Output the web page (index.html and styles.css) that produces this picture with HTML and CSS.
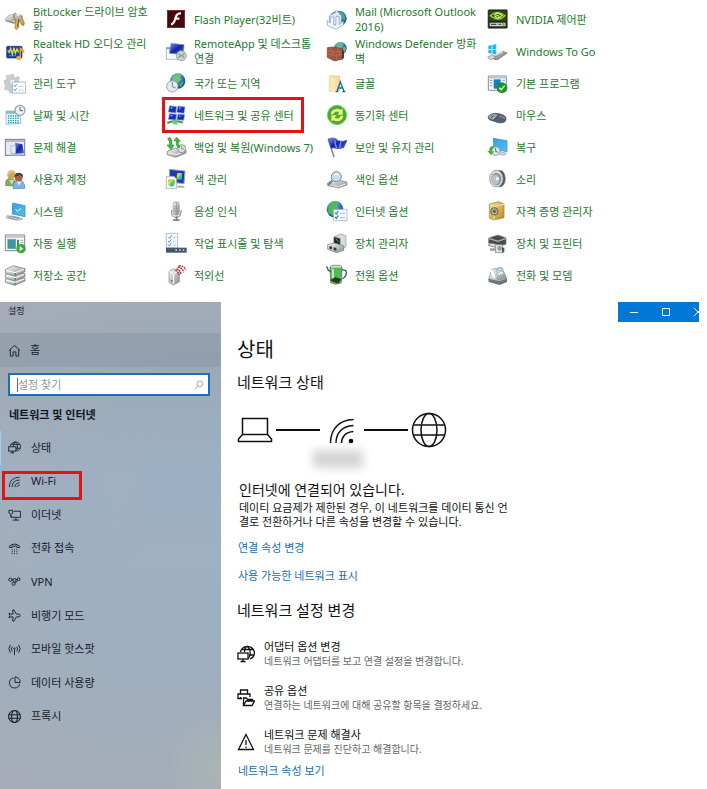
FILE: index.html
```html
<!DOCTYPE html>
<html lang="ko">
<head>
<meta charset="utf-8">
<meta name="viewport" content="width=device-width, initial-scale=1">
<title>설정</title>
<link rel="stylesheet" href="styles.css">
</head>
<body>
<svg class="defs" aria-hidden="true">
  <defs>
    <radialGradient id="earth" cx=".4" cy=".3" r=".75"><stop offset="0" stop-color="#8ed4f2"/><stop offset=".5" stop-color="#2f80c6"/><stop offset="1" stop-color="#123a80"/></radialGradient>
    <linearGradient id="navy" x2="1" y2="1"><stop offset="0" stop-color="#7f93e8"/><stop offset=".5" stop-color="#1224a8"/><stop offset="1" stop-color="#4f6cdc"/></linearGradient>
    <linearGradient id="sky" x2="1" y2="1"><stop offset="0" stop-color="#2ba0e6"/><stop offset="1" stop-color="#55bdf5"/></linearGradient>
    <linearGradient id="metal" x2="1" y2="1"><stop offset="0" stop-color="#fafafa"/><stop offset="1" stop-color="#888b90"/></linearGradient>
    <linearGradient id="gold" x2="1" y2="1"><stop offset="0" stop-color="#f4de95"/><stop offset="1" stop-color="#b88a28"/></linearGradient>
    <linearGradient id="rainbow" x2="1" y2="1"><stop offset="0" stop-color="#f03838"/><stop offset=".3" stop-color="#f7e531"/><stop offset=".55" stop-color="#3bd860"/><stop offset=".8" stop-color="#29aef0"/><stop offset="1" stop-color="#c33ce0"/></linearGradient>
    <symbol id="globe" viewBox="0 0 36 36"><g fill="none" stroke="currentColor"><circle cx="18" cy="18" r="16.5"/><ellipse cx="18" cy="18" rx="8" ry="16.5"/><path d="M2.500 13h31M2.500 23h31"/></g></symbol>
    <symbol id="net-globe" viewBox="0 0 18 18"><g fill="none" stroke="currentColor" stroke-width="1.300"><path d="M3.500 7a7 6.500 0 1 1 9.500 7M7.500 7C7.700 3.500 9 1.500 10 1.500s3.200 3 3.200 6.500c0 2.500-.8 4-1.700 5.500M4 4.500h12M12 10h4.500"/><rect x="1" y="8" width="10" height="6"/><path d="M6 14v2.500M3.500 16.500h5"/></g></symbol>
  </defs>
</svg>

<nav class="panel" aria-label="제어판">
  <a class="tile" href="#"><svg viewBox="0 0 66 66"><path d="M4 31q12-14 38-13l14 6-9 9-23 8-20-5z" fill="url(#metal)" stroke="#aaa" stroke-width="2"/><path d="M5 38l24 7 14-5" fill="none" stroke="#898989" stroke-width="4"/><path d="M35 14a12 13 0 1 0 17 9l9 22-2 8-7-3-6-15-3 25-6 5-4-5 2-26a12 13 0 0 1 0-20z" fill="url(#gold)" stroke="#986f20" stroke-width="2"/><circle cx="42" cy="20" r="4" fill="#fff1bb"/><path d="M44 34l-3 22" stroke="#6e4f20" stroke-width="3"/></svg><span>BitLocker 드라이브 암호<br>화</span></a>
  <a class="tile" href="#"><svg viewBox="0 0 66 66"><rect x="8" y="19" width="46" height="35" rx="3" fill="#1641a8" stroke="#0b2a73" stroke-width="2"/><path d="M11 31l5 6 4-12 5 18 5-20 4 17 5-13 5 10" fill="none" stroke="#e3d94a" stroke-width="4"/><path d="M47 52V22q13 3 14 17-5-6-10-6v19" fill="#edac29" stroke="#aa700e" stroke-width="1"/><ellipse cx="44" cy="54" rx="8" ry="6" fill="#f1a626"/><path d="M15 47h21" stroke="#6aaae4" stroke-width="2"/></svg><span>Realtek HD 오디오 관리<br>자</span></a>
  <a class="tile" href="#"><svg viewBox="0 0 66 66"><path d="M20 7h9l1 7 6 3 6-5 6 7-5 6 3 6 6 1v9l-8 1-3 6 4 5-7 6-6-4-6 3-1 5h-8l-2-7-5-3-6 2-4-7 5-5-1-6-5-2V25l7-1 3-5-4-6 7-5 5 4z" fill="#c9cdd2" stroke="#a5abb2"/><circle cx="26" cy="30" r="9" fill="#f4f5f5" stroke="#aaa" stroke-width="2"/><path d="M25 30h40v33H25z" fill="#fcfdff" stroke="#8e979f" stroke-width="2"/><path d="M30 40l3 4 5-7M30 52l3 4 5-7" fill="none" stroke="#26a1cf" stroke-width="3"/><path d="M42 43h17M42 54h17" stroke="#b7bdc2" stroke-width="2"/></svg><span>관리 도구</span></a>
  <a class="tile" href="#"><svg viewBox="0 0 66 66"><path d="M6 21h40l5 37-45 3z" fill="#e8f6fb" stroke="#7da4b4" stroke-width="2"/><path d="M6 21h40v8H6z" fill="#7bbcd3"/><path d="M12 36h33M12 43h34M12 50h35M12 56h34" stroke="#3596b3" stroke-width="4" stroke-dasharray="4 3"/><circle cx="48" cy="19" r="15" fill="#edf2f6" stroke="#93a4b0" stroke-width="4"/><path d="M48 9v11h9" fill="none" stroke="#52626e" stroke-width="3"/></svg><span>날짜 및 시간</span></a>
  <a class="tile" href="#"><svg viewBox="0 0 66 66"><rect x="4" y="10" width="58" height="48" fill="#e8eaf2" stroke="#7a7f89" stroke-width="3"/><path d="M5 15h56" stroke="#aab1bf" stroke-width="5"/><path d="M33 20l22 5 5 27-27 1z" fill="url(#navy)"/><path d="M21 29h14v23H21z" fill="#e7edf4" stroke="#9ca7b5" stroke-width="2"/><path d="M20 56h37" stroke="#b5bfc8" stroke-width="4"/></svg><span>문제 해결</span></a>
  <a class="tile" href="#"><svg viewBox="0 0 66 66"><path d="M5 53q-2-24 16-22 13 0 16 23z" fill="#87ac5a" stroke="#638542" stroke-width="2"/><circle cx="22" cy="20" r="12" fill="#d9a15a"/><path d="M11 20q-1-15 12-14 11 0 12 12l-9-5z" fill="#dfc087"/><path d="M16 36l7 14 7-14" fill="#d5e2ad"/><path d="M28 62q-3-27 17-26 16 1 18 25z" fill="#80b5df" stroke="#527fab" stroke-width="2"/><circle cx="44" cy="28" r="12" fill="#9f6445"/><path d="M32 27q0-14 13-13 13 1 12 13l-9-6z" fill="#4b3c36"/><path d="M39 41l6 12 7-12" fill="#d9e9f3"/></svg><span>사용자 계정</span></a>
  <a class="tile" href="#"><svg viewBox="0 0 66 66"><path d="M26 9l37 8v33l-38-8z" fill="url(#sky)" stroke="#337da9" stroke-width="2"/><path d="M35 28l5 6 11-9" fill="none" stroke="#fff" stroke-width="3"/><path d="M9 47l29 4 18 6-17 4-32-8z" fill="#d7dce0" stroke="#8b949c" stroke-width="2"/><path d="M14 49l31 7M22 47l25 8M12 52l25 7" stroke="#7b8890" stroke-width="2"/></svg><span>시스템</span></a>
  <a class="tile" href="#"><svg viewBox="0 0 66 66"><path d="M4 9h58v47H4z" fill="#f8fafb" stroke="#7c878e" stroke-width="3"/><path d="M5 15h56" stroke="#bcc5cd" stroke-width="5"/><path d="M11 22h24v28H11z" fill="#4196a2" stroke="#3b7383"/><path d="M39 23h6v24h-6z" fill="#3c954c"/><path d="M49 25h9M49 32h9M49 39h9" stroke="#a3b3ba" stroke-width="3"/><circle cx="51" cy="50" r="14" fill="#35aa35"/><path d="M47 42v16l11-8z" fill="#fff"/></svg><span>자동 실행</span></a>
  <a class="tile" href="#"><svg viewBox="0 0 66 66"><g fill="url(#metal)" stroke="#696d70" stroke-width="2"><path d="M4 46l23-10 36 7v8L32 64 4 55z"/><path d="M4 32l23-10 36 7v9L32 51 4 42z"/><path d="M4 17L27 5l36 9v9L32 36 4 28z"/></g><path d="M6 19l27 7 27-10M6 34l27 7 28-10M6 48l27 7 28-10" stroke="#fff" stroke-width="3" fill="none"/><path d="M34 27v6M34 42v6M34 56v6" stroke="#33983a" stroke-width="4"/></svg><span>저장소 공간</span></a>

  <a class="tile" href="#"><svg viewBox="0 0 66 66"><rect x="7" y="7" width="52" height="52" fill="#430a0b" stroke="#6d1c1c" stroke-width="2"/><path d="M48 16c-13-1-15 9-18 19-3 9-5 14-12 14M28 32h15" fill="none" stroke="#fff" stroke-width="7"/></svg><span>Flash Player(32비트)</span></a>
  <a class="tile" href="#"><svg viewBox="0 0 66 66"><path d="M4 22h39v36H4z" fill="#f8f9ff" stroke="#8895bd" stroke-width="2"/><path d="M4 25h39" stroke="#7893d9" stroke-width="5"/><path d="M18 10l39 4-2 30-42-4z" fill="url(#navy)" stroke="#8a98ba" stroke-width="2"/><circle cx="49" cy="47" r="15" fill="#c8ceca" stroke="#879089" stroke-width="2"/><path d="M41 41l6 6-6 6M57 41l-6 6 6 6" fill="none" stroke="#278e43" stroke-width="3"/></svg><span>RemoteApp 및 데스크톱<br>연결</span></a>
  <a class="tile" href="#"><svg viewBox="0 0 66 66"><circle cx="38" cy="27" r="23" fill="url(#earth)"/><path d="M22 16q15-15 28-6l-8 7 7 5-12 10-10-2z" fill="#7ac267"/><path d="M48 31l8-3-6 17-8-4z" fill="#4fab6c"/><circle cx="22" cy="43" r="17" fill="#e4ebee" stroke="#99a6b0" stroke-width="3"/><path d="M22 30v14l10 4" fill="none" stroke="#788993" stroke-width="3"/></svg><span>국가 또는 지역</span></a>
  <a class="tile marked" href="#"><svg viewBox="0 0 66 66"><g fill="#1530b4" stroke="#8ca0dd" stroke-width="2"><path d="M14 5l21 3-3 19-22-3zM39 6l21 3-3 19-22-3zM14 29l21 2-3 17-22-2zM39 30l20 2-3 17-21-2z"/></g><path d="M16 9l7 1-3 6M41 10l7 1-3 6M16 33l7 1-3 5M41 34l7 1-3 5" fill="#8fa9ff"/><path d="M7 57q19-10 47-1" fill="none" stroke="#37a34e" stroke-width="6"/><path d="M24 51h14v10H24z" fill="#77c585"/></svg><span>네트워크 및 공유 센터</span></a>
  <a class="tile" href="#"><svg viewBox="0 0 66 66"><path d="M7 46l25-10 31 6v9L32 64 7 56z" fill="url(#metal)" stroke="#6a6e70" stroke-width="2"/><path d="M9 50l24 6 27-10" fill="none" stroke="#efefef" stroke-width="3"/><circle cx="50" cy="38" r="12" fill="#dfe6e2" stroke="#879187" stroke-width="3"/><path d="M50 30v9h7" fill="none" stroke="#666" stroke-width="2"/><path d="M14 4q9 8 6 23h7L18 41 6 27h7q4-10-5-19zM42 36q-11-7-8-22h-7L35 4l11 12h-6q-2 9 5 17z" fill="#42b83e" stroke="#258a29" stroke-width="2"/></svg><span>백업 및 복원(Windows 7)</span></a>
  <a class="tile" href="#"><svg viewBox="0 0 66 66"><path d="M13 4l47 5-3 38-43-5z" fill="#2136b4" stroke="#96a4bd" stroke-width="3"/><path d="M36 14l16 2-2 19-15-1z" fill="url(#rainbow)"/><path d="M4 25h23l8 8v29H4z" fill="#fafafa" stroke="#989b9f" stroke-width="2"/><path d="M10 36l11-4 9 5-3 16-9 3-8-6z" fill="url(#rainbow)"/><path d="M36 53h20l4 6H38z" fill="#a8b0ba"/></svg><span>색 관리</span></a>
  <a class="tile" href="#"><svg viewBox="0 0 66 66"><path d="M20 30q-3 22 13 22t15-22" fill="none" stroke="#9a9fa7" stroke-width="4"/><rect x="24" y="5" width="19" height="41" rx="9" fill="url(#metal)" stroke="#969ca3" stroke-width="2"/><path d="M26 20h15M26 26h15M26 32h15M34 8v34" stroke="#858990" stroke-width="2"/><path d="M32 49h5v9h-5z" fill="#777"/><ellipse cx="34" cy="60" rx="11" ry="3" fill="#7c8288"/></svg><span>음성 인식</span></a>
  <a class="tile" href="#"><svg viewBox="0 0 66 66"><path d="M4 4h34v44H4z" fill="#f7fbff" stroke="#8ba0b6" stroke-width="2"/><path d="M10 15l4 4 6-9M9 27l4 4 6-9M9 38l4 4 6-9" fill="none" stroke="#3098d4" stroke-width="3"/><path d="M24 16h10M23 28h11M23 39h11" stroke="#9db1c1" stroke-width="2"/><path d="M3 47h62v15H3z" fill="#43546e"/><path d="M31 54h5M42 54h5M53 54h5" stroke="#cdd8e8" stroke-width="4"/></svg><span>작업 표시줄 및 탐색</span></a>
  <a class="tile" href="#"><svg viewBox="0 0 66 66"><path d="M12 21l16-7 15 6v34l-18 9-13-8z" fill="url(#metal)" stroke="#8a8d91" stroke-width="2"/><path d="M13 22l13 7 16-8M26 29l-1 31" fill="none" stroke="#fff" stroke-width="3"/><circle cx="20" cy="50" r="3" fill="#488a40"/><path d="M35 14q11 3 13 17M38 9q16 3 18 16M41 5q17 1 21 12M31 18q8 3 10 15" fill="none" stroke="#b92732" stroke-width="4" stroke-dasharray="6 2"/></svg><span>적외선</span></a>

  <a class="tile" href="#"><svg viewBox="0 0 66 66"><circle cx="39" cy="31" r="23" fill="url(#earth)"/><path d="M40 9q22 7 17 29l-12-8 4-12-11-2z" fill="#45a968"/><path d="M10 24L31 7l15 16v29H10z" fill="#dbe9fb" stroke="#7991bf" stroke-width="2"/><path d="M3 38l10 7V27h10v24h7V25h9v25l13-11v12L29 63 5 53z" fill="#f5f9ff" stroke="#8191af" stroke-width="2"/><path d="M15 19l14-7" stroke="#6f8fca" stroke-width="4"/></svg><span>Mail (Microsoft Outlook<br>2016)</span></a>
  <a class="tile" href="#"><svg viewBox="0 0 66 66"><circle cx="43" cy="25" r="19" fill="url(#earth)"/><path d="M33 10q11-7 20-1l-8 10-13 5zM54 20l7 4-5 14-8-8z" fill="#63bd70"/><path d="M4 23l15-2 31 5v31l-25 6L4 52z" fill="#9d5440" stroke="#723c31" stroke-width="2"/><path d="M5 32l20 4 25-3M5 42l20 4 25-3M14 23v10M35 24v10M20 35v10M41 35v10M12 44v9M32 46v14" fill="none" stroke="#c07d64" stroke-width="2"/><path d="M48 28l6 5v20l-6 5" fill="#56332f"/></svg><span>Windows Defender 방화<br>벽</span></a>
  <a class="tile" href="#"><svg viewBox="0 0 66 66"><path d="M11 11l30 2v43l-30 2z" fill="#f8dda0" stroke="#d8b86c" stroke-width="2"/><path d="M11 11l17 9v42l-17-7z" fill="#ffe8af"/><path d="M33 58l10-28 11 28M36 48h14M29 59h8M49 59h9" fill="none" stroke="#176ea0" stroke-width="4"/></svg><span>글꼴</span></a>
  <a class="tile" href="#"><svg viewBox="0 0 66 66"><circle cx="33" cy="33" r="29" fill="#45af2d" stroke="#6bcb52" stroke-width="2"/><path d="M14 31q2-16 19-17 7 0 12 4l5-5v19H34l6-7q-13-7-18 6zM52 35q-2 16-19 17-7 0-12-4l-5 5V34h16l-6 7q13 7 18-6z" fill="#efef82"/></svg><span>동기화 센터</span></a>
  <a class="tile" href="#"><svg viewBox="0 0 66 66"><path d="M7 8l17 56" stroke="#8b8ea0" stroke-width="5"/><path d="M7 9q18-8 30 5 12 5 26-1L53 35q-16 4-24 2-6-3-14 0z" fill="url(#navy)" stroke="#394fb7" stroke-width="2"/><path d="M27 13q0 14 5 23M44 18l-3 18" fill="none" stroke="#7d95f2" stroke-width="4"/></svg><span>보안 및 유지 관리</span></a>
  <a class="tile" href="#"><svg viewBox="0 0 66 66"><path d="M4 45l22-12 37 9v9L37 60 5 53z" fill="url(#metal)" stroke="#85898c" stroke-width="2"/><circle cx="31" cy="26" r="15" fill="#c6e0f0" stroke="#78899d" stroke-width="3"/><path d="M24 24q6-9 14-3" fill="none" stroke="#fff" stroke-width="4"/><path d="M19 38L7 51" stroke="#6e7d87" stroke-width="6"/><path d="M23 53l14 3 22-8" stroke="#eee" stroke-width="3" fill="none"/></svg><span>색인 옵션</span></a>
  <a class="tile" href="#"><svg viewBox="0 0 66 66"><circle cx="27" cy="28" r="25" fill="url(#earth)"/><path d="M10 14Q25-2 39 9l-9 8 7 7-13 8-5 15L6 37z" fill="#52ba51"/><path d="M22 28h41v34H22z" fill="#f7faff" stroke="#94a2b1" stroke-width="2"/><path d="M27 38l4 4 6-9M27 51l4 4 6-9" fill="none" stroke="#258abc" stroke-width="4"/><path d="M42 40h15M42 53h15" stroke="#acb4bc" stroke-width="3"/></svg><span>인터넷 옵션</span></a>
  <a class="tile" href="#"><svg viewBox="0 0 66 66"><path d="M25 14l18-8 17 5v33L43 56 24 41z" fill="#d9dbdc" stroke="#909497" stroke-width="2"/><path d="M24 15l18 5v23l-18-5z" fill="#182b28" stroke="#555" stroke-width="2"/><path d="M29 20l8 9" stroke="#65ae7c" stroke-width="3"/><path d="M5 38l20-5 28 8v14L32 62 5 52z" fill="url(#metal)" stroke="#74787b" stroke-width="2"/><path d="M10 42l8 2v8l-8-2zM23 46l8 2v8l-8-2z" fill="#303635"/></svg><span>장치 관리자</span></a>
  <a class="tile" href="#"><svg viewBox="0 0 66 66"><path d="M12 9l6-5h24l6 5-2 47q-16 9-32 0z" fill="#55b855" stroke="#407c41" stroke-width="2"/><path d="M15 8h30" stroke="#d5dcd5" stroke-width="6"/><path d="M20 14l2 36" stroke="#c4ecc0" stroke-width="6"/><path d="M2 7l5 12 7 4M48 18q14-2 13 9 0 10-12 18" fill="none" stroke="#4b5466" stroke-width="4"/><path d="M12 49l16-10 18 7-9 12-15-4z" fill="#2b3732"/><path d="M11 54l14 4" stroke="#bba455" stroke-width="3"/></svg><span>전원 옵션</span></a>

  <a class="tile" href="#"><svg viewBox="0 0 66 66"><rect x="3" y="5" width="58" height="56" rx="3" fill="#191b1a" stroke="#565b57" stroke-width="2"/><path d="M5 8h54v32H5z" fill="#304715"/><path d="M10 23q20-20 44 0-20 20-44 0z" fill="none" stroke="#a2d73b" stroke-width="4"/><path d="M21 22q10-12 24 0-12 14-21 4 6-6 13-1" fill="none" stroke="#c7f663" stroke-width="4"/><path d="M8 44h48v11H8z" fill="#ccd0cd"/><path d="M12 49h16M34 49h8" stroke="#495049" stroke-width="4"/><circle cx="49" cy="49" r="5" fill="#85ba30"/></svg><span>NVIDIA 제어판</span></a>
  <a class="tile" href="#"><svg viewBox="0 0 66 66"><path d="M4 17l10-2v12H4zM16 15l12-3v15H16zM4 29h10v12L4 39zM16 29h12v15l-12-3z" fill="#27b5e9"/><path d="M17 50l30-16 14 5-29 20-11-1z" fill="#9b9b9d" stroke="#686a6d" stroke-width="2"/><path d="M2 52l14-8 10 8-15 8z" fill="#d5d5d5" stroke="#78797b" stroke-width="2"/><path d="M23 47l25-12" stroke="#e1e1e1" stroke-width="4"/></svg><span>Windows To Go</span></a>
  <a class="tile" href="#"><svg viewBox="0 0 66 66"><path d="M4 12h54v43H4z" fill="#f7f8fa" stroke="#86919b" stroke-width="3"/><path d="M5 17h53" stroke="#bdc6cf" stroke-width="5"/><path d="M20 22h21v28H20z" fill="#167dca"/><path d="M8 25h8M8 33h8M8 41h8M46 25h8" stroke="#76a9ca" stroke-width="3"/><circle cx="45" cy="47" r="16" fill="#169720"/><path d="M37 47l6 6 10-12" fill="none" stroke="#fff" stroke-width="4"/></svg><span>기본 프로그램</span></a>
  <a class="tile" href="#"><svg viewBox="0 0 66 66"><path d="M4 36Q18 23 43 31q16 5 14 16-3 12-23 9L7 47q-5-6-3-11z" fill="#566070" stroke="#3b4651" stroke-width="2"/><path d="M5 36q14-10 29-3L21 48 7 43z" fill="#9aa4b3"/><path d="M34 33L20 49M19 35l-7 6" stroke="#313c4b" stroke-width="3"/><path d="M36 37q15 2 17 8" fill="none" stroke="#8792a2" stroke-width="4"/></svg><span>마우스</span></a>
  <a class="tile" href="#"><svg viewBox="0 0 66 66"><path d="M19 7l41 7v33l-39-8z" fill="url(#sky)" stroke="#278acb" stroke-width="2"/><path d="M39 47l20 5-8 6-22-5z" fill="#d1d8db" stroke="#96a0a5" stroke-width="2"/><circle cx="26" cy="45" r="13" fill="#e5e9ed" stroke="#8f98a0" stroke-width="3"/><path d="M26 36v10l7 3" fill="none" stroke="#59666e" stroke-width="3"/><path d="M19 29Q4 32 7 45H1l11 13 10-12h-6q-3-6 7-11z" fill="#48af48"/></svg><span>복구</span></a>
  <a class="tile" href="#"><svg viewBox="0 0 66 66"><ellipse cx="39" cy="32" rx="16" ry="25" fill="#4d5257" stroke="#888" stroke-width="2"/><ellipse cx="28" cy="32" rx="20" ry="25" fill="#dce0e2" stroke="#9b9fa2" stroke-width="3"/><ellipse cx="28" cy="33" rx="15" ry="19" fill="#8f969c"/><ellipse cx="25" cy="35" rx="12" ry="15" fill="#b9c0c5"/><circle cx="31" cy="32" r="5" fill="#f3f4f5"/></svg><span>소리</span></a>
  <a class="tile" href="#"><svg viewBox="0 0 66 66"><path d="M7 12l28-7 16 7v41l-31 7-13-6z" fill="url(#gold)" stroke="#a27c2a" stroke-width="2"/><path d="M8 13l13 6 30-6M21 19v40" fill="none" stroke="#f8e9a9" stroke-width="3"/><circle cx="22" cy="34" r="11" fill="#d7d0b2" stroke="#6e5b31" stroke-width="3"/><path d="M22 23v22M12 34h20M15 27l14 14M29 27L15 41" stroke="#6e654b" stroke-width="2"/><circle cx="22" cy="34" r="4" fill="#565e5b"/></svg><span>자격 증명 관리자</span></a>
  <a class="tile" href="#"><svg viewBox="0 0 66 66"><path d="M5 18l28-9 24 9v19l-26 6-26-9z" fill="#484b4e" stroke="#75797b" stroke-width="2"/><path d="M5 19l28 9 24-9" fill="none" stroke="#abb0b3" stroke-width="4"/><path d="M10 33l33 6-9 9-30-8z" fill="#dbe4e7" stroke="#555" stroke-width="2"/><path d="M25 38h22v24H25z" fill="#e1e2df" stroke="#777" stroke-width="2"/><circle cx="38" cy="49" r="7" fill="#8f9da5"/><path d="M45 47h7v14h-7z" fill="#515658"/><path d="M9 49h18v7H9z" fill="#999"/></svg><span>장치 및 프린터</span></a>
  <a class="tile" href="#"><svg viewBox="0 0 66 66"><path d="M5 44l9-28 30-6 16 34-22 16z" fill="url(#metal)" stroke="#858f97" stroke-width="2"/><path d="M4 44l33 8 23-8v10L38 63 5 54z" fill="#6b7681"/><path d="M13 18l10 24" stroke="#fff" stroke-width="8"/><path d="M28 17l16-4 7 15-17 7z" fill="#eaf6fc" stroke="#7ca4b7" stroke-width="2"/><path d="M31 21l14-3M33 25l14-3" stroke="#66acd0" stroke-width="2"/><path d="M29 42l26-7M32 47l26-7" stroke="#5c6871" stroke-width="2" stroke-dasharray="4 3"/></svg><span>전화 및 모뎀</span></a>
</nav>

<div class="settings">
  <aside class="sidebar">
    <div class="app-name">설정</div>
    <a class="home" href="#"><svg viewBox="0 0 14 14"><path d="M1 7l6-5.500L13 7M2.500 6v7h3V8.500h3V13h3V6" fill="none" stroke="currentColor"/></svg>홈</a>
    <form class="search" role="search">
      <input type="text" placeholder="설정 찾기" aria-label="설정 찾기">
      <i class="caret"></i>
      <svg viewBox="0 0 12 12"><circle cx="7" cy="4.500" r="3.500" fill="none" stroke="currentColor"/><path d="M4.500 7L1 11" stroke="currentColor"/></svg>
    </form>
    <h2 class="group">네트워크 및 인터넷</h2>
    <nav class="menu" aria-label="네트워크 및 인터넷">
      <a class="current" href="#"><svg viewBox="0 0 18 18"><use href="#net-globe"/></svg>상태</a>
      <a class="marked" href="#"><svg viewBox="0 0 14 14"><g fill="none" stroke="currentColor"><path d="M1.500 13C1.500 6 6 2.500 12.500 2.500M4.500 13c0-5 3-7.500 8-7.500M7.500 13c0-3 2-4.500 5-4.500M10 13c0-1.500 1-2 2.500-2"/></g></svg>Wi-Fi</a>
      <a href="#"><svg viewBox="0 0 14 14"><g fill="none" stroke="currentColor"><path d="M6 3.500h7.500v6.500h-10V8M8.500 10v3M5 13h7M1 2.500h4v3L3.500 7 1 5.500zM3 7v3"/></g></svg>이더넷</a>
      <a href="#"><svg viewBox="0 0 14 14"><path d="M1.500 6V4.500Q7 0 12.500 4.500V6h-3V4.500h-5V6z" fill="none" stroke="currentColor"/><path d="M4.500 8v5M7 8v5M9.500 8v5" stroke="currentColor" stroke-dasharray="1 1"/></svg>전화 접속</a>
      <a href="#"><svg viewBox="0 0 14 14"><g fill="none" stroke="currentColor"><circle cx="2.500" cy="5" r="1.700"/><circle cx="7" cy="5.500" r="1.700"/><circle cx="11.500" cy="4.500" r="1.500"/><circle cx="6" cy="9.500" r="1.700"/><path d="M4 5h1.500M8.500 5h1.500M7.500 9l3-3"/></g></svg>VPN</a>
      <a href="#"><svg viewBox="0 0 14 14"><path d="M1 4.500l2 1h2.500L5 1h1.500L9 5.500h3q2.500 1.500 0 3H9L6.500 13H5l.5-4.500H3l-2 1L2 7z" fill="none" stroke="currentColor"/></svg>비행기 모드</a>
      <a href="#"><svg viewBox="0 0 14 14"><g fill="none" stroke="currentColor"><path d="M2.500 2Q-.5 6 2.500 10.500M4.500 4q-1.500 2.500 0 5M11.500 2q3 4 0 8.500M9.500 4q1.500 2.500 0 5M7 7v6"/><circle cx="7" cy="6" r=".7"/></g></svg>모바일 핫스팟</a>
      <a href="#"><svg viewBox="0 0 14 14"><path d="M6 2a5.500 5.500 0 1 0 6.500 6.500M7.500 1v6H13A5.500 5.500 0 0 0 7.500 1z" fill="none" stroke="currentColor"/></svg>데이터 사용량</a>
      <a href="#"><svg class="proxy" viewBox="0 0 36 36"><use href="#globe"/></svg>프록시</a>
    </nav>
  </aside>

  <main class="content">
    <div class="window-buttons">
      <button type="button" aria-label="최소화"><svg viewBox="0 0 8 8"><path d="M0 4.500h8" stroke="currentColor"/></svg></button>
      <button type="button" aria-label="최대화"><svg viewBox="0 0 8 8"><path d="M.5.5h7v7h-7z" fill="none" stroke="currentColor"/></svg></button>
      <button type="button" aria-label="닫기"><svg viewBox="0 0 8 8"><path d="M0 0l8 8M8 0L0 8" stroke="currentColor"/></svg></button>
    </div>
    <h1>상태</h1>
    <h2>네트워크 상태</h2>
    <div class="diagram">
      <svg class="node" viewBox="0 0 36 36"><path d="M5.500 6.500h25v16h-25zM5.500 22.500L1.500 27v2.500h33V27l-4-4.500" fill="none" stroke="currentColor" stroke-width="1.500"/></svg>
      <i class="wire"></i>
      <div class="hub">
        <svg class="node" viewBox="0 0 36 36"><g fill="none" stroke="currentColor" stroke-width="1.500"><path d="M6.500 31C6.500 17 15 8 29.500 7.500M12 31c0-10 6-17 17.500-17.500M17.500 31c0-6 4-11 12-11.500"/></g><circle cx="27" cy="29" r="2.300"/></svg>
        <i class="blurred-name"></i>
      </div>
      <i class="wire"></i>
      <svg class="node world" viewBox="0 0 36 36"><use href="#globe"/></svg>
    </div>
    <h3>인터넷에 연결되어 있습니다.</h3>
    <p>데이티 요금제가 제한된 경우, 이 네트워크를 데이티 통신 언<br>결로 전환하거나 다른 속성을 변경할 수 있습니다.</p>
    <a class="link" href="#">연결 속성 변경</a>
    <a class="link" href="#">사용 가능한 네트워크 표시</a>
    <h2 class="change">네트워크 설정 변경</h2>
    <div class="options">
      <a class="option" href="#"><svg viewBox="0 0 18 18"><use href="#net-globe"/></svg><span><b>어댑터 옵션 변경</b><small>네트워크 어댑터를 보고 연결 설정을 변경합니다.</small></span></a>
      <a class="option" href="#"><svg viewBox="0 0 18 18"><g fill="none" stroke="currentColor" stroke-width="1.300"><path d="M3.500 5V1h7v4M5 9.500H1V5h12v3M3.500 9.500V8"/><path d="M6.500 16.500V9h3l1 1.500h5V12M6.500 16.500L9 12h8.500l-2.500 4.500z"/></g></svg><span><b>공유 옵션</b><small>연결하는 네트워크에 대해 공유할 항목을 결정하세요.</small></span></a>
      <a class="option" href="#"><svg viewBox="0 0 18 18"><path d="M9 1.500l7.500 15h-15z" fill="none" stroke="currentColor" stroke-width="1.300"/><path d="M9 7v5M9 13.500V15" stroke="currentColor" stroke-width="1.300"/></svg><span><b>네트워크 문제 해결사</b><small>네트워크 문제를 진단하고 해결합니다.</small></span></a>
    </div>
    <a class="link last" href="#">네트워크 속성 보기</a>
  </main>
</div>
</body>
</html>
```
FILE: styles.css
```css
* { box-sizing: border-box; }

body {
  margin: 0;
  min-height: 100vh;
  display: flex;
  flex-direction: column;
  background: #fff;
  color: #111;
  font: 11px/14px "Noto Sans", "Noto Sans CJK KR", sans-serif;
}

a { color: inherit; text-decoration: none; }
h1, h2, h3, p { margin: 0; font-weight: 400; }
svg { flex: none; }
.defs { position: absolute; width: 0; height: 0; }

/* Control panel tiles, filled column by column */
.panel {
  display: grid;
  grid-auto-flow: column;
  grid-template-rows: repeat(9, 32px);
  grid-template-columns: repeat(4, minmax(0, 161px));
  padding: 3px 4px 11px;
}
.tile {
  position: relative;
  display: flex;
  align-items: center;
  gap: 7px;
  color: #247a2b;
  line-height: 15px;
  white-space: nowrap;
}
.tile svg { width: 22px; height: 22px; }

.marked { position: relative; }
.marked::after {
  content: "";
  position: absolute;
  border: 3px solid #e21217;
}
.tile.marked::after { inset: -2px 22px -2px -3px; }

.settings {
  flex: 1;
  display: grid;
  grid-template-columns: 221px minmax(0, 1fr);
}

/* Sidebar */
.sidebar {
  background:
    radial-gradient(circle at 100% 96%, #aab5b5 0, #aab5b500 60px),
    linear-gradient(100deg, #a7acb680 0, #a3adb900 60%),
    linear-gradient(180deg, #a2acb8 0, #9baab9 14%, #9db0c3 35%, #9eafc0 70%, #a4acb7 100%);
  color: #17202a;
}
.app-name { height: 31px; padding: 2px 8px; font-size: 9px; }
.home {
  display: flex;
  align-items: center;
  gap: 9px;
  height: 34px;
  padding-left: 8px;
  background: #7f8b9759;
}
.home svg, .menu svg { width: 13px; height: 13px; }
.search {
  position: relative;
  display: flex;
  align-items: center;
  height: 23px;
  margin: 6px 11px 0 8px;
  border: 2px solid #1c6fbe;
  background: #fff;
  color: #8f969b;
}
.search input {
  flex: 1;
  min-width: 0;
  border: 0;
  outline: 0;
  padding: 0 8px;
  background: none;
  font: inherit;
}
.search input::placeholder { color: #8f969b; opacity: 1; }
.search svg { width: 10px; height: 10px; margin-right: 4px; }
.caret {
  position: absolute;
  left: 7px;
  width: 1px;
  height: 14px;
  background: #666;
}
.group {
  margin-top: 11px;
  padding-left: 9px;
  font-size: 11px;
  line-height: 16px;
  font-weight: 700;
  color: #10161d;
}
.menu {
  display: grid;
  grid-template-rows: repeat(9, 1fr);
  height: 302px;
  margin-top: 8px;
}
.menu a {
  display: flex;
  align-items: center;
  gap: 10px;
  padding-left: 8px;
}
.menu .current { box-shadow: inset 1px 0 #9fd1f0; }
.menu .proxy { stroke-width: 3; }
.menu .marked::after { inset: 6px 139px -2px 2px; }

/* Main column */
.content { padding: 0 8px 8px 16px; }
.window-buttons {
  display: flex;
  width: 81px;
  height: 20px;
  margin-left: auto;
  overflow: hidden;
  background: #0078d7;
}
.window-buttons button {
  flex: none;
  width: 32px;
  padding: 0;
  border: 0;
  background: none;
  color: #fff;
  line-height: 0;
}
.window-buttons svg { width: 8px; height: 8px; }
h1 { margin-top: 14px; font-size: 20px; line-height: 28px; }
h2 { font-size: 15px; line-height: 20px; }
h1 + h2 { margin-top: 8px; }
.diagram {
  display: flex;
  align-items: center;
  gap: 3px;
  height: 36px;
  margin-top: 20px;
}
.node { display: block; width: 36px; height: 36px; }
.world { stroke-width: 1.5; }
.wire { width: 44px; height: 2px; background: #111; }
.hub { position: relative; padding: 0 1px; }
.blurred-name {
  position: absolute;
  top: 38px;
  left: -10px;
  width: 50px;
  height: 18px;
  background: #d4d4d4;
  filter: blur(5px);
}
h3 { margin-top: 32px; padding-left: 2px; font-size: 14px; line-height: 20px; }
p { margin-top: 1px; padding-left: 2px; }
.link { display: block; width: fit-content; margin-left: 1px; color: #146fb2; line-height: 16px; }
p + .link { margin-top: 11px; }
.link + .link { margin-top: 12px; }
.change { margin-top: 16px; }
.options { display: grid; gap: 15px; margin-top: 19px; }
.option { display: flex; gap: 9px; align-items: center; }
.option svg { width: 18px; height: 18px; }
.option b { display: block; font-weight: 400; line-height: 15px; }
.option small { display: block; font-size: 10px; line-height: 14px; color: #666; }
.last { margin-top: 7px; }
```
